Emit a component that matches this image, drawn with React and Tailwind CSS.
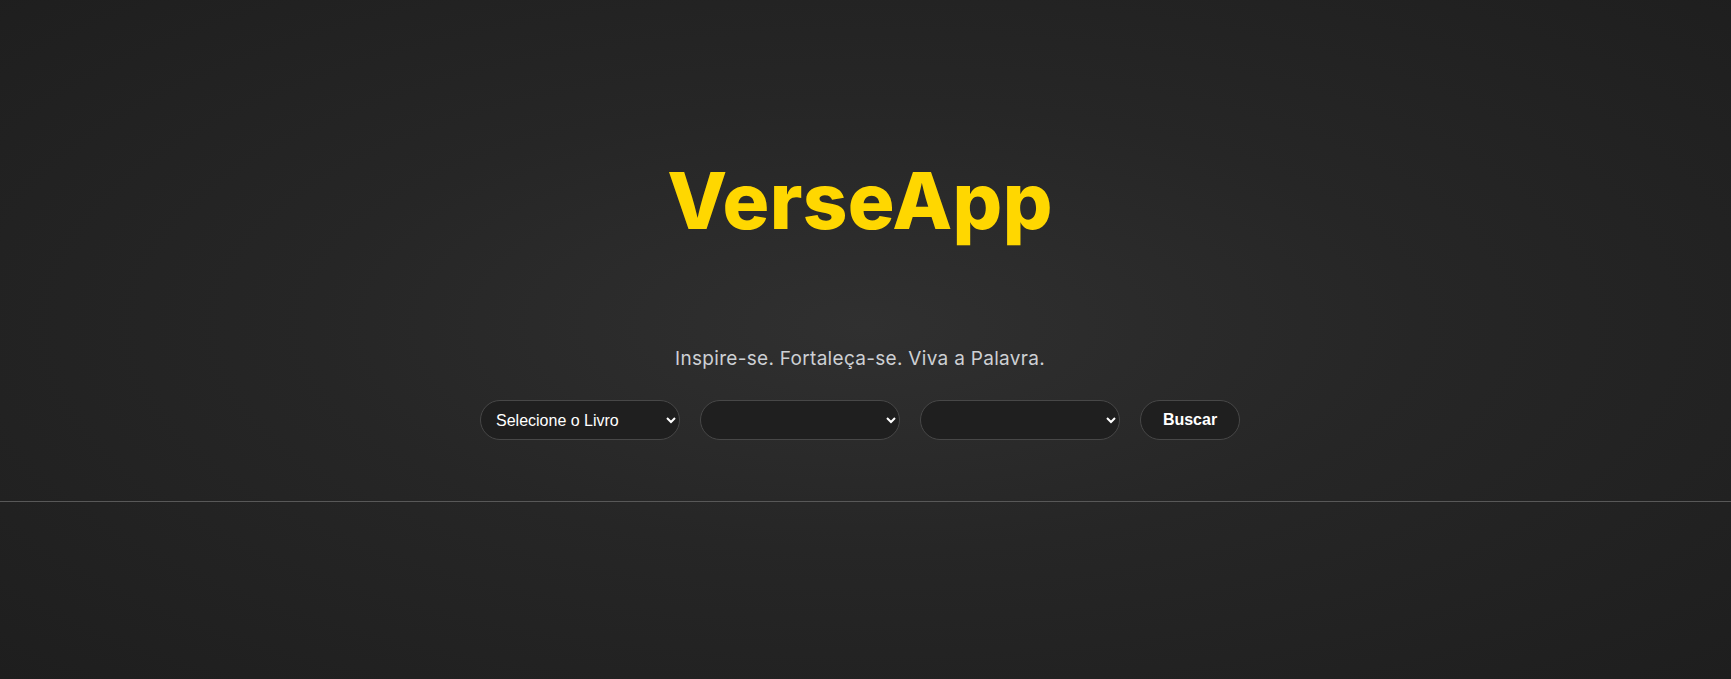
import React, { useState } from "react";

const books = ["Gênesis", "Êxodo", "Levítico", "Números", "Deuteronômio", "Salmos", "Provérbios", "Mateus", "Marcos", "Lucas", "João"];

const selectClass =
  "w-[200px] h-10 rounded-full border border-[#474747] bg-[#1f1f1f] pl-[11px] pr-[8px] text-[16px] text-white font-['Liberation_Sans',Arial,sans-serif] outline-none";

const App = () => {
  const [book, setBook] = useState("");

  return (
    <div className="min-h-screen w-full bg-[radial-gradient(ellipse_at_50%_48%,#303030_0%,#262626_45%,#1e1e1e_100%)] font-['Inter',sans-serif]">
      <header className="h-[502px] border-b border-[#585858] flex flex-col items-center pt-[162px] pr-[11px]">
        <h1 className="text-[78px] leading-none font-extrabold tracking-[0.3px] text-[#ffd700]">VerseApp</h1>
        <p className="mt-[105px] text-[19px] leading-7 tracking-[0.3px] text-[#cdd0d4]">Inspire-se. Fortaleça-se. Viva a Palavra.</p>
        <div className="mt-[27px] flex items-center gap-5">
          <select className={selectClass} value={book} onChange={(e) => setBook(e.target.value)}>
            <option value="">Selecione o Livro</option>
            {books.map((b) => (
              <option key={b} value={b}>
                {b}
              </option>
            ))}
          </select>
          <select className={selectClass} defaultValue="">
            <option value=""></option>
          </select>
          <select className={selectClass} defaultValue="">
            <option value=""></option>
          </select>
          <button
            type="button"
            className="w-[100px] h-10 rounded-full border border-[#474747] bg-[#1f1f1f] text-[16px] font-bold text-white font-['Liberation_Sans',Arial,sans-serif]"
          >
            Buscar
          </button>
        </div>
      </header>
      <main className="h-[177px]"></main>
    </div>
  );
};

export default App;
